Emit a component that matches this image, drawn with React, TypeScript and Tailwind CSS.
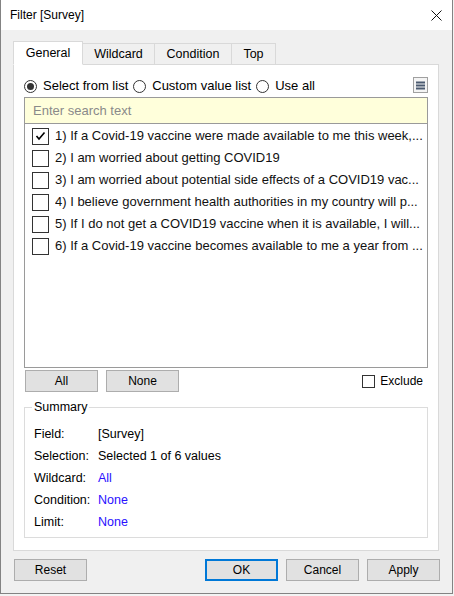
import React from 'react';

const items = [
  '1) If a Covid-19 vaccine were made available to me this week,...',
  '2) I am worried about getting COVID19',
  '3) I am worried about potential side effects of a COVID19 vac...',
  '4) I believe government health authorities in my country will p...',
  '5) If I do not get a COVID19 vaccine when it is available, I will...',
  '6) If a Covid-19 vaccine becomes available to me a year from ...',
];

const summary = [
  { label: 'Field:', value: '[Survey]', blue: false },
  { label: 'Selection:', value: 'Selected 1 of 6 values', blue: false },
  { label: 'Wildcard:', value: 'All', blue: true },
  { label: 'Condition:', value: 'None', blue: true },
  { label: 'Limit:', value: 'None', blue: true },
];

function Radio({ checked, label }: { checked?: boolean; label: string }) {
  return (
    <div className="flex items-center gap-[6px] pt-[2px]">
      <span className="w-[13px] h-[13px] rounded-full border border-[#333] bg-white flex items-center justify-center">
        {checked && <span className="w-[7px] h-[7px] rounded-full bg-[#333]" />}
      </span>
      <span className="text-[13px] leading-[16px] text-black">{label}</span>
    </div>
  );
}

function Checkbox({ checked, size = 17 }: { checked?: boolean; size?: number }) {
  return (
    <span
      className={`shrink-0 border border-[#333] bg-white flex items-center justify-center ${
        size === 17 ? 'w-[17px] h-[17px]' : 'w-[13px] h-[13px]'
      }`}
    >
      {checked && (
        <svg width="11" height="10" viewBox="0 0 11 10">
          <polyline points="1.5,5 4,8 9.5,1.5" fill="none" stroke="#000" strokeWidth="1.6" />
        </svg>
      )}
    </span>
  );
}

function Btn({ label, primary }: { label: string; primary?: boolean }) {
  return (
    <button
      className={`w-[73px] h-[22px] bg-[#e1e1e1] text-[12px] text-black flex items-center justify-center ${
        primary ? 'border-2 border-[#0078d7]' : 'border border-[#adadad]'
      }`}
    >
      {label}
    </button>
  );
}

function Tab({ label, active, w }: { label: string; active?: boolean; w: string }) {
  return (
    <div
      className={`${w} flex items-center justify-center text-[12.5px] text-black border border-[#d9d9d9] ${
        active ? 'h-[24px] bg-white border-b-white relative z-10' : 'h-[22px] bg-[#f0f0f0] -ml-px'
      }`}
    >
      {label}
    </div>
  );
}

export default function App() {
  return (
    <div className="w-[454px] h-[596px] bg-[#f3f3f3] font-['Liberation_Sans',Arial,sans-serif]">
      <div className="w-[453px] h-[594px] border-x border-b border-[#838383] bg-[#f0f0f0] flex flex-col">
        {/* title bar */}
        <div className="h-[30px] bg-white flex items-center justify-between pl-[9px] pr-[10px]">
          <span className="text-[12px] text-black">Filter [Survey]</span>
          <svg width="11" height="11" viewBox="0 0 11 11">
            <path d="M0.5 0.5 L10.5 10.5 M10.5 0.5 L0.5 10.5" stroke="#111" strokeWidth="1" />
          </svg>
        </div>

        <div className="pl-[12px] pt-[11px]">
          {/* tabs */}
          <div className="flex items-end -mb-px">
            <Tab label="General" active w="w-[70px]" />
            <Tab label="Wildcard" w="w-[73px]" />
            <Tab label="Condition" w="w-[78px]" />
            <Tab label="Top" w="w-[45px]" />
          </div>

          {/* panel */}
          <div className="w-[426px] bg-white border border-[#d9d9d9] px-[10px] pt-[12px] pb-[12px]">
            <div className="h-[16px] flex items-center gap-[5px] mb-[4px]">
              <Radio checked label="Select from list" />
              <Radio label="Custom value list" />
              <Radio label="Use all" />
              <span className="ml-auto w-[15px] h-[16px] border border-[#a0a0a0] bg-[#f4f4f4] flex items-center justify-center">
                <svg width="9" height="9" viewBox="0 0 9 9">
                  <rect x="0" y="0.5" width="9" height="2" fill="#4b5a70" />
                  <rect x="0" y="3.5" width="9" height="2" fill="#4b5a70" />
                  <rect x="0" y="6.5" width="9" height="2" fill="#4b5a70" />
                </svg>
              </span>
            </div>

            {/* list box */}
            <div className="w-[404px] h-[271px] border border-[#9a9a9a] flex flex-col">
              <div className="h-[26px] bg-[#ffffdb] border-b border-[#9a9a9a] pl-[8px] flex items-center text-[13px] text-[#8a8a8a]">
                Enter search text
              </div>
              <div className="pt-[1px] pl-[7px] pr-[4px]">
                {items.map((t, i) => (
                  <div key={i} className="h-[22px] flex items-center gap-[6px]">
                    <Checkbox checked={i === 0} />
                    <span className="text-[13px] text-[#111] whitespace-nowrap overflow-hidden">{t}</span>
                  </div>
                ))}
              </div>
            </div>

            {/* all / none / exclude */}
            <div className="mt-[2px] h-[22px] flex items-center">
              <div className="flex gap-[8px] pl-[1px]">
                <Btn label="All" />
                <Btn label="None" />
              </div>
              <div className="ml-auto flex items-center gap-[5px] pr-[5px]">
                <Checkbox size={13} />
                <span className="text-[12px] text-black">Exclude</span>
              </div>
            </div>

            {/* summary */}
            <fieldset className="mt-[8px] w-[404px] border border-[#dcdcdc] px-[9px] pb-[4px]">
              <legend className="ml-[-2px] px-[2px] text-[12.5px] leading-[15px] text-black">Summary</legend>
              <div className="pt-[8px]">
                {summary.map((r) => (
                  <div key={r.label} className="h-[22px] flex items-center text-[12.5px]">
                    <span className="w-[64px] text-black">{r.label}</span>
                    <span className={r.blue ? 'text-[#2a10ff]' : 'text-black'}>{r.value}</span>
                  </div>
                ))}
              </div>
            </fieldset>
          </div>
        </div>

        {/* bottom buttons */}
        <div className="mt-[8px] pl-[13px] pr-[12px] flex items-center">
          <Btn label="Reset" />
          <div className="ml-auto flex gap-[8px]">
            <Btn label="OK" primary />
            <Btn label="Cancel" />
            <Btn label="Apply" />
          </div>
        </div>
      </div>
    </div>
  );
}
